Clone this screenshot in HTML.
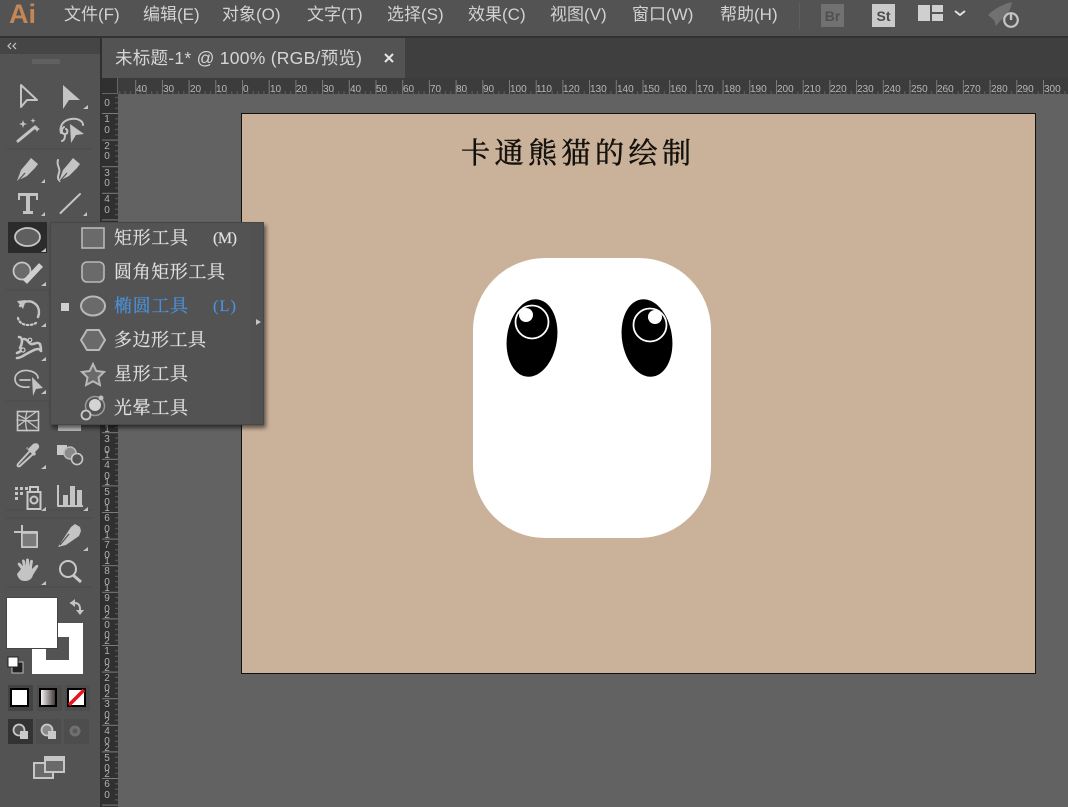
<!DOCTYPE html>
<html><head><meta charset="utf-8"><style>
html,body{margin:0;padding:0;width:1068px;height:807px;overflow:hidden;background:#626262}
svg{display:block}
.m{font:17px "Liberation Sans","Noto Sans CJK SC",sans-serif;fill:#d2d2d2}
.r{font:10px "Liberation Sans",sans-serif;fill:#b8b8b8}
.v{font:10px "Liberation Sans",sans-serif;fill:#b0b0b0;text-anchor:middle}
.f{font:18px "Liberation Serif","Noto Serif CJK SC",serif;fill:#e0e0e0;stroke:#e0e0e0;stroke-width:.2}
.ic{fill:none;stroke:#c4c4c4;stroke-width:2;stroke-linejoin:round;stroke-linecap:round}
.s{fill:#c4c4c4}
.g{fill:#6a6a6a;stroke:#b8b8b8;stroke-width:2}
</style></head><body>
<svg width="1068" height="807" viewBox="0 0 1068 807" xmlns="http://www.w3.org/2000/svg">
<defs>
<pattern id="tt" x="242" y="78" width="26.7" height="16" patternUnits="userSpaceOnUse">
<path d="M.5 2V16" stroke="#7c7c7c" stroke-width="1" fill="none"/>
<path d="M5.800 13V16M11.200 13V16M16.500 13V16M21.900 13V16" stroke="#5e5e5e" stroke-width="1" fill="none"/>
</pattern>
<pattern id="tl" x="102" y="113" width="16" height="26.6" patternUnits="userSpaceOnUse">
<path d="M0 .5H16" stroke="#7c7c7c" stroke-width="1" fill="none"/>
<path d="M13 5.800H16M13 11.200H16M13 16.500H16M13 21.900H16" stroke="#5e5e5e" stroke-width="1" fill="none"/>
</pattern>
<linearGradient id="gr" x1="0" x2="1" y1="0" y2="0"><stop offset="0" stop-color="#fff"/><stop offset="1" stop-color="#3a3030"/></linearGradient>
<filter id="sh" x="-10%" y="-10%" width="120%" height="120%"><feDropShadow dx="2" dy="3" stdDeviation="2" flood-color="#000" flood-opacity=".55"/></filter>
</defs>

<!-- base -->
<rect width="1068" height="807" fill="#626262"/>
<rect width="1068" height="37" fill="#535353"/>
<rect y="36" width="1068" height="2" fill="#323232"/>
<rect x="102" y="38" width="966" height="40" fill="#3f3f3f"/>
<rect x="102" y="38" width="303" height="40" fill="#535353"/>

<!-- menu bar -->
<text x="9" y="23" font-family="Liberation Sans,sans-serif" font-weight="700" font-size="27" fill="#c48654">Ai</text>
<text class="m" x="64" y="20">文件(F)</text>
<text class="m" x="143" y="20">编辑(E)</text>
<text class="m" x="222" y="20">对象(O)</text>
<text class="m" x="307" y="20">文字(T)</text>
<text class="m" x="387" y="20">选择(S)</text>
<text class="m" x="468" y="20">效果(C)</text>
<text class="m" x="550" y="20">视图(V)</text>
<text class="m" x="632" y="20">窗口(W)</text>
<text class="m" x="720" y="20">帮助(H)</text>
<rect x="799" y="2" width="1" height="28" fill="#5e5e5e"/>
<rect x="821" y="4" width="23" height="23" fill="#717171"/>
<text x="832.5" y="21" font-family="Liberation Sans,sans-serif" font-weight="700" font-size="14" fill="#505050" text-anchor="middle">Br</text>
<rect x="872" y="4" width="23" height="23" fill="#cacaca"/>
<text x="883.5" y="21" font-family="Liberation Sans,sans-serif" font-weight="700" font-size="14" fill="#4c4c4c" text-anchor="middle">St</text>
<path d="M918 5h12v16h-12zM932 5h11v7h-11zM932 14h11v7h-11z" fill="#cfcfcf"/>
<path d="M955 11l5 4 5-4" fill="none" stroke="#e0e0e0" stroke-width="2"/>
<path d="M988 15c6-6 15-11 24-13-1 8-6 15-12 19l-4 5-2-6z" fill="#717171"/>
<circle cx="1011" cy="20" r="6.800" fill="#535353" stroke="#c4c4c4" stroke-width="2.200"/>
<path d="M1011 13v7" stroke="#c4c4c4" stroke-width="2.400"/>

<!-- tab -->
<text x="115" y="64" font-family="Liberation Sans,Noto Sans CJK SC,sans-serif" font-size="17.500" fill="#d6d6d6" textLength="247">未标题-1* @ 100% (RGB/预览)</text>
<path d="M385 54l8 8M393 54l-8 8" stroke="#e6e6e6" stroke-width="2"/>

<!-- toolbar -->
<rect y="38" width="100" height="769" fill="#535353"/>
<rect y="38" width="100" height="16" fill="#454545"/>
<rect x="100" y="38" width="2" height="769" fill="#2f2f2f"/>
<path d="M11 43l-3 3 3 3M16 43l-3 3 3 3" fill="none" stroke="#c8c8c8" stroke-width="1.200"/>
<path d="M33 59v5M35 59v5M37 59v5M39 59v5M41 59v5M43 59v5M45 59v5M47 59v5M49 59v5M51 59v5M53 59v5M55 59v5M57 59v5M59 59v5" stroke="#6c6c6c" stroke-width="1"/>
<path d="M6 149H92M6 290H92M6 401H92M6 510H92M6 518H92M6 587H92" stroke="#4b4b4b" stroke-width="1"/>

<!-- rulers -->
<rect x="102" y="78" width="966" height="16" fill="#3c3c3c"/>
<rect x="102" y="78" width="16" height="729" fill="#303030"/>
<rect x="118" y="78" width="950" height="16" fill="url(#tt)"/>
<rect x="102" y="94" width="16" height="713" fill="url(#tl)"/>
<path d="M102 93.5H118M117.500 78V94" stroke="#666" stroke-width="1"/>
<g class="r">
<text x="136" y="92">40</text><text x="163" y="92">30</text><text x="190" y="92">20</text><text x="216" y="92">10</text><text x="243" y="92">0</text><text x="270" y="92">10</text><text x="296" y="92">20</text><text x="323" y="92">30</text><text x="350" y="92">40</text><text x="376" y="92">50</text><text x="403" y="92">60</text><text x="430" y="92">70</text><text x="456" y="92">80</text><text x="483" y="92">90</text><text x="510" y="92">100</text><text x="536" y="92">110</text><text x="563" y="92">120</text><text x="590" y="92">130</text><text x="617" y="92">140</text><text x="643" y="92">150</text><text x="670" y="92">160</text><text x="697" y="92">170</text><text x="724" y="92">180</text><text x="750" y="92">190</text><text x="777" y="92">200</text><text x="804" y="92">210</text><text x="830" y="92">220</text><text x="857" y="92">230</text><text x="884" y="92">240</text><text x="911" y="92">250</text><text x="937" y="92">260</text><text x="964" y="92">270</text><text x="991" y="92">280</text><text x="1017" y="92">290</text><text x="1044" y="92">300</text>
</g>
<g class="v">
<text x="107" y="106">0</text>
<text x="107" y="122">1</text><text x="107" y="133">0</text>
<text x="107" y="149">2</text><text x="107" y="159">0</text>
<text x="107" y="176">3</text><text x="107" y="186">0</text>
<text x="107" y="202">4</text><text x="107" y="213">0</text>
<text x="107" y="432">1</text><text x="107" y="442">3</text><text x="107" y="453">0</text>
<text x="107" y="458">1</text><text x="107" y="468">4</text><text x="107" y="479">0</text>
<text x="107" y="485">1</text><text x="107" y="495">5</text><text x="107" y="505">0</text>
<text x="107" y="511">1</text><text x="107" y="521">6</text><text x="107" y="532">0</text>
<text x="107" y="538">1</text><text x="107" y="548">7</text><text x="107" y="558">0</text>
<text x="107" y="564">1</text><text x="107" y="574">8</text><text x="107" y="585">0</text>
<text x="107" y="591">1</text><text x="107" y="601">9</text><text x="107" y="612">0</text>
<text x="107" y="618">2</text><text x="107" y="628">0</text><text x="107" y="638">0</text>
<text x="107" y="644">2</text><text x="107" y="654">1</text><text x="107" y="665">0</text>
<text x="107" y="671">2</text><text x="107" y="681">2</text><text x="107" y="691">0</text>
<text x="107" y="697">2</text><text x="107" y="707">3</text><text x="107" y="718">0</text>
<text x="107" y="724">2</text><text x="107" y="734">4</text><text x="107" y="744">0</text>
<text x="107" y="751">2</text><text x="107" y="761">5</text><text x="107" y="771">0</text>
<text x="107" y="777">2</text><text x="107" y="787">6</text><text x="107" y="798">0</text>
</g>

<!-- artboard -->
<rect x="241.500" y="113.500" width="794" height="560" fill="#c9b299" stroke="#111" stroke-width="1"/>
<text x="461" y="163" font-family="Noto Serif CJK SC,serif" font-size="29" letter-spacing="4.500" fill="#15110d" stroke="#15110d" stroke-width=".5">卡通熊猫的绘制</text>
<rect x="473" y="258" width="238" height="280" rx="72" ry="72" fill="#fff"/>
<g>
<ellipse cx="532" cy="338" rx="25" ry="39" transform="rotate(9 532 338)" fill="#000"/>
<circle cx="532" cy="322" r="16.500" fill="none" stroke="#fff" stroke-width="1.800"/>
<circle cx="526" cy="315" r="7" fill="#fff"/>
<ellipse cx="647" cy="338" rx="25" ry="39" transform="rotate(-9 647 338)" fill="#000"/>
<circle cx="650" cy="325" r="16.500" fill="none" stroke="#fff" stroke-width="1.800"/>
<circle cx="655" cy="317" r="7" fill="#fff"/>
</g>

<!-- tools -->
<path class="ic" d="M21 85L37 100L27 100L21 107Z"/>
<path class="s" d="M63 85L80 100L69 100L63 109Z"/>
<path class="ic" style="stroke-width:3" d="M18 141L35 127"/>
<path class="s" d="M23 120l1 3 3 1-3 1-1 3-1-3-3-1 3-1zM37 126l1 2 2 1-2 1-1 2-1-2-2-1 2-1zM33 118l.7 2 2 .7-2 .7-.7 2-.7-2-2-.7 2-.7z"/>
<path class="ic" d="M61 133c-2-8 3-13 10-14 7-1 12 2 12 6M64 127c-3 2-3 7 1 7 3 0 3-4 1-5M65 134c0 3 0 6-3 7"/>
<path class="s" d="M70 124L84 134L76 135L71 143Z"/>
<path class="s" d="M31 158l7 6-3 4-8 8-10 5 4-11 6-7z"/>
<path d="M18 181l7-8" stroke="#535353" stroke-width="1.200"/>
<path class="s" d="M73 158l7 6-3 4-8 8-10 5 4-11 6-7z"/>
<path class="ic" d="M58 160c-2 6 3 8 1 13-1 3-2 6 1 8"/>
<path d="M60 181l7-8" stroke="#535353" stroke-width="1.200"/>
<path class="s" d="M18 193H38V200H36V196H30V211H33V214H23V211H26V196H20V200H18Z"/>
<path class="ic" d="M60.500 213L80 194"/>
<path class="s" d="M41 216l4-4v4zM83 216l4-4v4zM41 183l4-4v4zM83 109l5-4v4z"/>

<rect x="8" y="222" width="39" height="31" fill="#2b2b2b"/>
<ellipse cx="27.500" cy="237" rx="12.500" ry="9" fill="#5f5f5f" stroke="#c6c6c6" stroke-width="1.800"/>
<path class="s" d="M41 252l5-4v4z"/>
<circle cx="22" cy="271" r="8.500" fill="#6a6a6a" stroke="#c6c6c6" stroke-width="1.800"/>
<path d="M25 282L41 265" stroke="#d0d0d0" stroke-width="5.500"/>
<path class="s" d="M41 286l5-4v4z"/>

<path class="ic" style="stroke-width:2.400" d="M20 306c4-5 10-6 14-3 5 3 6 9 4 14"/>
<path class="s" d="M17 301l9-1-3 9z"/>
<path d="M18 318c1 5 6 7 10 7 4 0 7-1 9-3" fill="none" stroke="#c9c9c9" stroke-width="2.200" stroke-dasharray="1.500 2.500" stroke-linecap="round"/>
<path class="s" d="M41 327l5-4v4z"/>
<path class="ic" style="stroke-width:2.600" d="M19 337c2 0 3 2 3 4s-1 5-2 7M24 339c4 0 4 4 7 5 3 1 6-3 9 0 1 3 1 6 1 7-2-3-4-2-7-1-4 2-8 4-11 6-2 1-4 2-6 2M22 349c-1 2-2 3-5 4"/>
<circle cx="23" cy="350" r="2" fill="#535353" stroke="#c9c9c9" stroke-width="1.300"/>
<circle cx="30" cy="340" r="1.800" fill="#535353" stroke="#c9c9c9" stroke-width="1.200"/>
<path class="s" d="M41 361l5-4v4z"/>
<path class="ic" d="M30 371c-8-2-15 2-15 8s6 9 14 8M30 371c5 1 8 4 8 7M20 380h10" style="stroke-width:1.700"/>
<path class="s" d="M32 377L43 388L36 389L33 396Z"/>
<path class="s" d="M41 394l5-4v4z"/>

<rect x="17.500" y="411.500" width="21" height="19" fill="none" stroke="#c9c9c9" stroke-width="1.600"/>
<path class="ic" style="stroke-width:1.300" d="M17 420c7 0 15 2 21 0M27 411c-2 7-2 13 0 20M18 415l8 4 10-7M18 426l8-6 11 8"/>
<rect x="58" y="424" width="23" height="7" fill="#bbb"/>

<path class="ic" style="stroke-width:2" d="M29 452L18 464c-1 2 0 3 2 2L32 455"/>
<path class="s" d="M27 450l6-6c2-1 4-1 5 0 2 2 1 4 0 5l-3 3 1 2-2 2-8-8 2-1z"/>
<path class="s" d="M41 469l5-4v4z"/>
<rect x="57" y="445" width="10" height="10" fill="#c9c9c9"/>
<circle cx="70" cy="453" r="6" fill="#8a8a8a" stroke="#bbb" stroke-width="1.500"/>
<circle cx="77" cy="459" r="5.500" fill="#535353" stroke="#c9c9c9" stroke-width="1.600"/>

<path class="s" d="M15 487h3v3h-3zM20 487h3v3h-3zM25 487h3v3h-3zM15 492h3v3h-3zM20 492h3v3h-3zM15 497h3v3h-3z"/>
<path fill="none" stroke="#c9c9c9" stroke-width="2" d="M27.500 492h13v17h-13zM30 487h8v5h-8z"/>
<circle cx="34" cy="500" r="3.500" fill="none" stroke="#c9c9c9" stroke-width="2"/>
<path class="s" d="M41 511l5-4v4z"/>
<path class="ic" style="stroke-linecap:butt" d="M58 485V506H83"/>
<path class="s" d="M63 495h5v10h-5zM70 486h5v19h-5zM77 490h5v15h-5z"/>
<path class="s" d="M83 511l5-4v4z"/>

<path class="ic" style="stroke-linecap:butt" d="M14 532H37V547H22V525"/>
<rect x="22" y="533" width="15" height="14" fill="#7a7a7a" stroke="#c9c9c9" stroke-width="1.500"/>
<path class="s" d="M80 527l-5-3-4 3-13 20 8-2 13-9 2-5z"/>
<path d="M60 545l9-11" stroke="#535353" stroke-width="1.300"/>
<path class="s" d="M83 551l5-4v4z"/>
<path class="s" d="M21 569l-3-4c-1-2 1-3 2-2l3 3-1-5c0-2 2-2 3 0l1 5 0-6c0-2 3-2 3 0v6l1-5c1-2 3-1 3 0l-1 6 0 2 3-3c2-2 4-1 3 1l-5 8c-1 4-4 6-8 6-5 0-7-3-8-7z"/>
<path class="s" d="M41 585l5-4v4z"/>
<circle cx="68" cy="569" r="8" fill="none" stroke="#c9c9c9" stroke-width="2"/>
<path d="M73 575L81 582" stroke="#c9c9c9" stroke-width="3"/>

<!-- fill/stroke -->
<rect x="32" y="623" width="51" height="51" fill="#fff"/>
<rect x="46" y="637" width="23" height="23" fill="#535353"/>
<rect x="6.500" y="597.500" width="51" height="51" fill="#fff" stroke="#454545"/>
<path class="ic" style="stroke-width:2" d="M71 603h4c3 0 5 2 5 6v3"/>
<path class="s" d="M75 599v8l-5-4zM76 610h8l-4 5z"/>
<rect x="12" y="662" width="11" height="11" fill="#222" stroke="#bbb"/>
<rect x="8" y="657" width="10" height="10" fill="#fff" stroke="#222"/>

<rect x="8" y="685" width="25" height="26" fill="#434343"/>
<rect x="37" y="685" width="25" height="26" fill="#4d4d4d"/>
<rect x="65" y="685" width="25" height="26" fill="#4d4d4d"/>
<rect x="11" y="689" width="17" height="17" fill="#fff" stroke="#000" stroke-width="2"/>
<rect x="40" y="689" width="16" height="17" fill="url(#gr)" stroke="#000" stroke-width="2"/>
<rect x="68" y="689" width="17" height="17" fill="#fff" stroke="#000" stroke-width="2"/>
<path d="M69 705L84 690" stroke="#e8141c" stroke-width="3.500"/>

<rect x="8" y="719" width="25" height="25" fill="#333"/>
<rect x="36" y="719" width="25" height="25" fill="#4d4d4d"/>
<rect x="64" y="719" width="25" height="25" fill="#4d4d4d"/>
<circle cx="19" cy="730" r="5.500" fill="#535353" stroke="#c9c9c9" stroke-width="1.800"/>
<rect x="20" y="731" width="8" height="8" fill="#c9c9c9"/>
<circle cx="47" cy="730" r="5.500" fill="#8a8a8a" stroke="#c9c9c9" stroke-width="1.800"/>
<rect x="48" y="731" width="8" height="8" fill="#c9c9c9"/>
<circle cx="75" cy="731" r="5.500" fill="#707070"/>
<circle cx="75" cy="731" r="2.500" fill="#5a5a5a"/>

<rect x="34" y="763" width="19" height="15" fill="#6a6a6a" stroke="#c6c6c6" stroke-width="2"/>
<rect x="45" y="757" width="19" height="15" fill="#6a6a6a" stroke="#c6c6c6" stroke-width="2"/>
<rect x="45" y="757" width="19" height="4" fill="#c6c6c6"/>

<!-- flyout menu -->
<g filter="url(#sh)"><rect x="50" y="222" width="214" height="203" fill="#515151"/></g>
<rect x="50" y="222" width="200" height="203" fill="#535353"/>
<rect x="50.500" y="222.500" width="213" height="202" fill="none" stroke="#474747"/>
<path class="s" d="M256 319l5 3-5 3z"/>
<rect x="82" y="228" width="22" height="20" fill="#6a6a6a" stroke="#b8b8b8" stroke-width="1.600"/>
<rect x="82" y="262" width="22" height="20" rx="5" fill="#6a6a6a" stroke="#b8b8b8" stroke-width="1.600"/>
<rect x="61" y="303" width="8" height="8" fill="#d0d0d0"/>
<ellipse cx="93" cy="306" rx="12" ry="9.500" class="g"/>
<path class="g" d="M87 330h12l6 10-6 10H87l-6-10z"/>
<path class="g" d="M93 364l3.300 7 7.700 1-5.500 5.400 1.400 7.600-6.900-3.700-6.900 3.700 1.400-7.600-5.500-5.400 7.700-1z"/>
<circle cx="95" cy="406" r="9.500" fill="none" stroke="#9a9a9a" stroke-width="1.500"/>
<circle cx="95" cy="405" r="6" fill="#d4d4d4"/>
<circle cx="101" cy="398" r="2.500" fill="#c0c0c0"/>
<circle cx="86" cy="415" r="4.500" fill="#535353" stroke="#c9c9c9" stroke-width="1.800"/>
<text class="f" x="114" y="244" textLength="74">矩形工具</text>
<text class="f" x="213" y="243" style="font-size:16px" textLength="24">(M)</text>
<text class="f" x="114" y="278" textLength="111">圆角矩形工具</text>
<text class="f" x="114" y="312" style="fill:#4a92dc;stroke:#4a92dc" textLength="74">椭圆工具</text>
<text class="f" x="213" y="311" style="font-size:16px;fill:#4a92dc;stroke:#4a92dc" textLength="23">(L)</text>
<text class="f" x="114" y="346" textLength="92">多边形工具</text>
<text class="f" x="114" y="380" textLength="74">星形工具</text>
<text class="f" x="114" y="414" textLength="74">光晕工具</text>
</svg>
</body></html>
